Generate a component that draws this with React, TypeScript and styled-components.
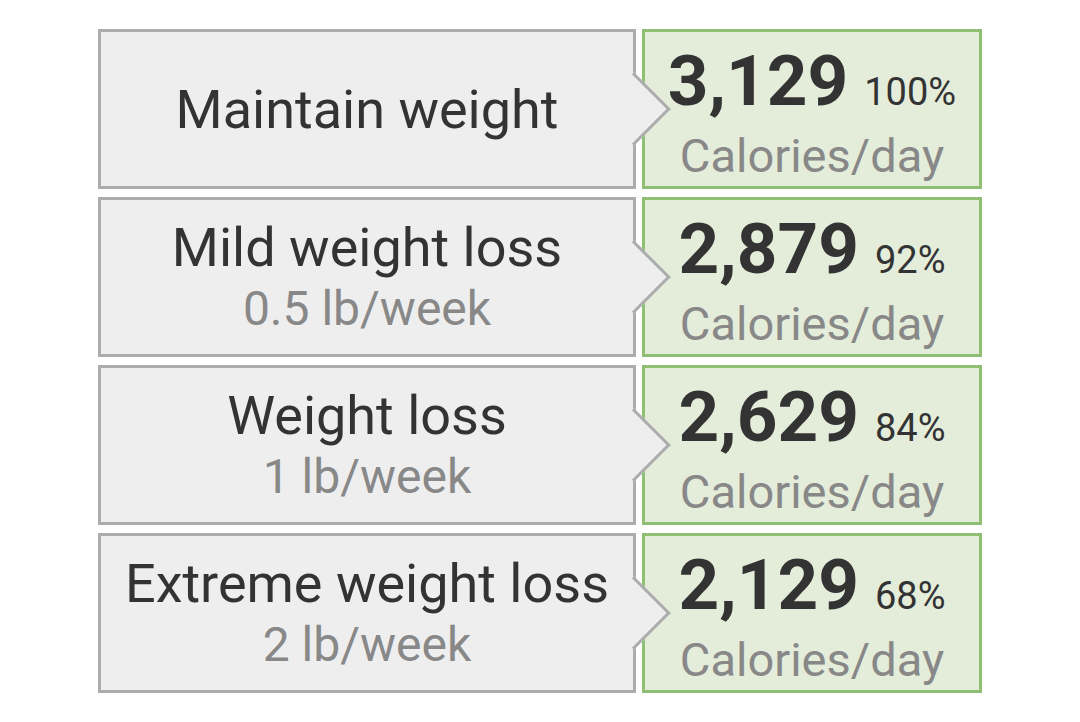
import React from "react";
import styled, { createGlobalStyle } from "styled-components";

const GlobalStyle = createGlobalStyle`
  html, body {
    margin: 0;
    padding: 0;
    background: #ffffff;
    font-family: Roboto, "Liberation Sans", sans-serif;
  }
`;

const Page = styled.div`
  width: 1080px;
  height: 722px;
  padding: 29px 0 0 98px;
  box-sizing: border-box;
`;

const Grid = styled.div`
  display: grid;
  grid-template-columns: 538px 340px;
  grid-auto-rows: 160px;
  column-gap: 6px;
  row-gap: 8px;
`;

const Goal = styled.div`
  position: relative;
  z-index: 1;
  box-sizing: border-box;
  background: #eeeeee;
  border: 3px solid #acacac;
  display: flex;
  flex-direction: column;
  align-items: center;
  justify-content: center;
  color: #333333;

  &::after {
    content: "";
    position: absolute;
    top: calc(50% - 26px);
    right: -27px;
    width: 52px;
    height: 52px;
    box-sizing: border-box;
    background: #eeeeee;
    border-top: 3px solid #acacac;
    border-right: 3px solid #acacac;
    transform: rotate(45deg);
  }
`;

const GoalTitle = styled.div`
  font-size: 54px;
  line-height: 63px;
`;

const GoalRate = styled.div`
  font-size: 48px;
  line-height: 59px;
  color: #888888;
`;

const Result = styled.div`
  box-sizing: border-box;
  background: #e4ecda;
  border: 3px solid #8fbf72;
  display: flex;
  flex-direction: column;
  align-items: center;
  justify-content: center;
`;

const Amount = styled.div`
  line-height: 74px;
  color: #333333;
  white-space: nowrap;
`;

const Calories = styled.span`
  font-size: 71px;
  font-weight: 700;
`;

const Percent = styled.span`
  font-size: 38px;
  margin-left: 16px;
`;

const Unit = styled.div`
  font-size: 47px;
  line-height: 38px;
  color: #888888;
`;

type Plan = { title: string; rate?: string; calories: string; percent: string };

const plans: Plan[] = [
  { title: "Maintain weight", calories: "3,129", percent: "100%" },
  { title: "Mild weight loss", rate: "0.5 lb/week", calories: "2,879", percent: "92%" },
  { title: "Weight loss", rate: "1 lb/week", calories: "2,629", percent: "84%" },
  { title: "Extreme weight loss", rate: "2 lb/week", calories: "2,129", percent: "68%" },
];

export default function App() {
  return (
    <Page>
      <GlobalStyle />
      <Grid>
        {plans.map((plan) => (
          <React.Fragment key={plan.title}>
            <Goal>
              <GoalTitle>{plan.title}</GoalTitle>
              {plan.rate && <GoalRate>{plan.rate}</GoalRate>}
            </Goal>
            <Result>
              <Amount>
                <Calories>{plan.calories}</Calories>
                <Percent>{plan.percent}</Percent>
              </Amount>
              <Unit>Calories/day</Unit>
            </Result>
          </React.Fragment>
        ))}
      </Grid>
    </Page>
  );
}
